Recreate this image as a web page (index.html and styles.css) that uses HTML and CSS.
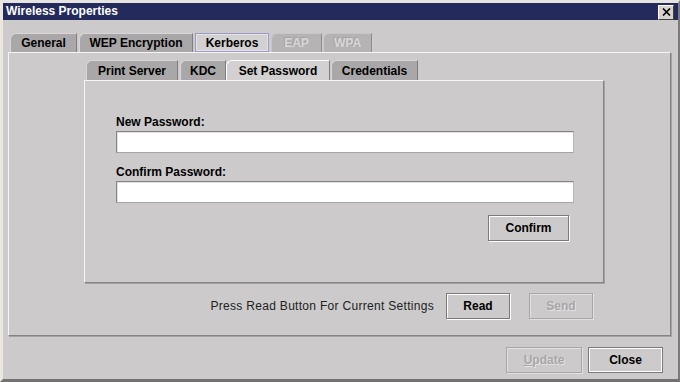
FILE: index.html
```html
<!DOCTYPE html>
<html lang="en">
<head>
  <meta charset="UTF-8"/>
  <title>Wireless Properties</title>
  <link rel="stylesheet" href="styles.css">
</head>
<body>
  <div class="window">
    <div class="titlebar">
      <span class="title">Wireless Properties</span>
      <button class="close-x" aria-label="Close">
        <svg width="9" height="8" viewBox="0 0 9 8"><path d="M1 0.5 L8 7.5 M8 0.5 L1 7.5" stroke="#000" stroke-width="1.6"/></svg>
      </button>
    </div>

    <div class="content">
      <div class="tabs outer-tabs">
        <div class="tab">General</div>
        <div class="tab">WEP Encryption</div>
        <div class="tab selected focus">Kerberos</div>
        <div class="tab disabled">EAP</div>
        <div class="tab disabled">WPA</div>
      </div>

      <div class="panel outer-panel">
        <div class="column">
          <div class="tabs inner-tabs">
            <div class="tab">Print Server</div>
            <div class="tab">KDC</div>
            <div class="tab selected">Set Password</div>
            <div class="tab">Credentials</div>
          </div>

          <div class="panel inner-panel">
            <label class="field-label">New Password:</label>
            <input class="field" type="password">
            <label class="field-label second">Confirm Password:</label>
            <input class="field" type="password">
            <div class="confirm-row">
              <button class="btn confirm">Confirm</button>
            </div>
          </div>

          <div class="read-row">
            <span class="hint">Press Read Button For Current Settings</span>
            <button class="btn read">Read</button>
            <button class="btn send" disabled>Send</button>
          </div>
        </div>
      </div>

      <div class="footer">
        <button class="btn update" disabled><u>U</u>pdate</button>
        <button class="btn close default">Close</button>
      </div>
    </div>
  </div>
</body>
</html>
```

FILE: styles.css
```css
:root {
  --bg: #cccacb;
  --tab-bg: #a9a7a8;
  --tab-disabled: #b5b3b4;
  --light: #f6f5f5;
  --dark: #858384;
  --shadow: #a4a2a3;
  --title-bg: #242a5c;
  --font: 'Liberation Sans', Arial, sans-serif;
}

*, *::before, *::after { box-sizing: border-box; }

body {
  margin: 0;
  background: var(--bg);
  font-family: var(--font);
  font-size: 12px;
  color: #000;
}

.window {
  width: 680px;
  height: 382px;
  background: var(--bg);
  border-top: 3px solid #e6e4e1;
  border-left: 3px solid #ebe7df;
  border-right: 2px solid #7b797a;
  border-bottom: 3px solid #737172;
  display: flex;
  flex-direction: column;
}

/* title bar */
.titlebar {
  height: 17px;
  background: var(--title-bg);
  display: flex;
  align-items: center;
  justify-content: space-between;
  padding: 0 4px 0 3px;
}

.title {
  color: #fff;
  font-weight: bold;
  font-size: 12px;
  line-height: 17px;
}

.close-x {
  width: 16px;
  height: 15px;
  padding: 0;
  margin-top: 1px;
  background: #d6d3ce;
  border: 1px solid;
  border-color: #fff #404040 #404040 #fff;
  display: flex;
  align-items: center;
  justify-content: center;
}

/* body */
.content {
  flex: 1;
  padding: 13px 7px 0 5px;
  display: flex;
  flex-direction: column;
}

.tabs {
  display: flex;
  margin-left: 2px;
}

.tab {
  font-weight: bold;
  font-size: 12px;
  background: var(--tab-bg);
  border-top: 1px solid #d8d6d7;
  border-left: 1px solid #d8d6d7;
  border-right: 1px solid #7f7d7e;
  border-top-left-radius: 6px;
  margin-right: 2px;
  display: flex;
  align-items: center;
  justify-content: center;
}

.outer-tabs .tab { height: 19px; padding: 0 9px; }
.inner-tabs .tab { height: 20px; padding: 0 9px; }

.outer-tabs .tab:nth-child(1) { width: 67px; }
.outer-tabs .tab:nth-child(2) { width: 114px; }
.outer-tabs .tab:nth-child(3) { width: 74px; }
.outer-tabs .tab:nth-child(4) { width: 51px; margin-right: 1px; }
.outer-tabs .tab:nth-child(5) { width: 49px; }

.inner-tabs .tab:nth-child(1) { width: 92px; }
.inner-tabs .tab:nth-child(2) { width: 46px; margin-right: 0; }
.inner-tabs .tab:nth-child(3) { width: 104px; margin-right: 1px; }
.inner-tabs .tab:nth-child(4) { width: 87px; }

.tab.selected {
  background: #d2d0d1;
  border-top-color: #fff;
  border-left-color: #fff;
}

.tab.focus {
  border: 1px solid #9b9bc6;
  border-radius: 0;
  box-shadow: inset 0 0 0 1px #e4e2e6;
}

.tab.disabled {
  background: var(--tab-disabled);
  color: #d9d7d8;
  text-shadow: -1px -1px 0 #a3a1a2;
  border-color: #c8c6c7 #8f8d8e #8f8d8e #c8c6c7;
}

/* panels */
.panel {
  background: var(--bg);
  border-top: 1px solid var(--light);
  border-left: 1px solid var(--light);
  border-right: 1px solid var(--dark);
  border-bottom: 1px solid var(--dark);
  box-shadow: 1px 1px 0 var(--shadow);
}

.outer-panel {
  height: 284px;
  padding: 7px 0 0 75px;
}

.column {
  width: 520px;
}

.inner-panel {
  height: 203px;
  padding: 34px 29px 0 31px;
  display: flex;
  flex-direction: column;
}

.field-label {
  font-weight: bold;
  line-height: 14px;
  margin-bottom: 2px;
}

.field-label.second { margin-top: 12px; }

.field {
  height: 22px;
  width: 458px;
  margin: 0;
  background: #fff;
  border: 1px solid;
  border-color: #868485 #b8b6b7 #a6a4a5 #868485;
  box-shadow: inset 1px 1px 0 #e0e0e0;
  outline: none;
}

.confirm-row {
  display: flex;
  justify-content: flex-end;
  padding-right: 5px;
  margin-top: 12px;
}

/* buttons */
.btn {
  font-family: var(--font);
  font-weight: bold;
  font-size: 12px;
  color: #000;
  height: 26px;
  padding: 0;
  background: var(--bg);
  border: 1px solid #7c7a7b;
  box-shadow: inset 1px 1px 0 #fff, 1px 1px 0 #fff;
}

.btn:disabled {
  color: #a8a6a7;
  border-color: #a8a6a7;
  box-shadow: inset 1px 1px 0 #e2e0e1, 1px 1px 0 #e2e0e1;
  text-shadow: 1px 1px 0 #e6e4e5;
}

.btn.default {
  box-shadow: inset 0 0 0 1px #fff;
}

.confirm { width: 81px; }
.read { width: 64px; }
.send { width: 64px; margin-left: 19px; }
.update { width: 76px; }
.close { width: 75px; margin-left: 6px; }

.read-row {
  display: flex;
  align-items: center;
  justify-content: flex-end;
  margin-top: 10px;
  padding-right: 11px;
}

.hint {
  color: #222;
  letter-spacing: 0.3px;
  margin-right: 12px;
}

.footer {
  display: flex;
  justify-content: flex-end;
  padding-right: 8px;
  margin-top: 11px;
}
```
